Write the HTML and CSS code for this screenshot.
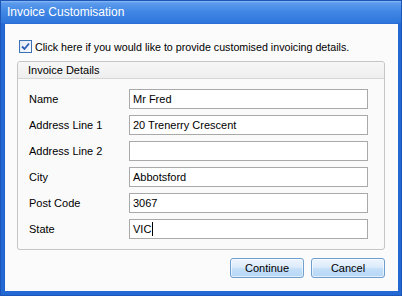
FILE: index.html
```html
<!DOCTYPE html>
<html lang="en">
<head>
  <meta charset="UTF-8">
  <meta name="viewport" content="width=device-width, initial-scale=1.0">
  <title>Invoice Customisation</title>
  <link rel="stylesheet" href="styles.css">
</head>
<body>
  <div class="window">
    <div class="titlebar">Invoice Customisation</div>
    <div class="client">
      <label class="check-row">
        <span class="checkbox">
          <svg width="9" height="9" viewBox="0 0 9 9">
            <path d="M1 4.5 L3.5 7 L8 1.5" fill="none" stroke="#2a5bb5" stroke-width="1.8"/>
          </svg>
        </span>
        Click here if you would like to provide customised invoicing details.
      </label>

      <div class="group">
        <div class="group-header">Invoice Details</div>
        <div class="group-body">
          <div class="row"><span class="label">Name</span><div class="field">Mr Fred</div></div>
          <div class="row"><span class="label">Address Line 1</span><div class="field">20 Trenerry Crescent</div></div>
          <div class="row"><span class="label">Address Line 2</span><div class="field"></div></div>
          <div class="row"><span class="label">City</span><div class="field">Abbotsford</div></div>
          <div class="row"><span class="label">Post Code</span><div class="field">3067</div></div>
          <div class="row"><span class="label">State</span><div class="field">VIC<span class="caret"></span></div></div>
        </div>
      </div>

      <div class="buttons">
        <button class="btn">Continue</button>
        <button class="btn">Cancel</button>
      </div>
    </div>
  </div>
</body>
</html>
```

FILE: styles.css
```css
body {
  margin: 0;
  font-family: Tahoma, 'Liberation Sans', Arial, sans-serif;
  font-size: 11px;
  color: #000;
}
.window {
  width: 402px;
  height: 296px;
  box-sizing: border-box;
  display: flex;
  flex-direction: column;
  background: #2468d4;
  border: 1px solid #1b56b8;
}
.titlebar {
  height: 22px;
  box-sizing: border-box;
  padding: 4px 0 0 6px;
  font-size: 12px;
  color: #fff;
  background: linear-gradient(#8dbaf3 0, #5b9bec 2px, #3f86e4 50%, #2f76dc 100%);
}
.client {
  flex: 1;
  margin: 0 3px 4px 3px;
  padding: 16px 13px 0 13px;
  background: #fbfbfb;
  border-top: 1px solid #2c6ed6;
  box-shadow: inset 1px 0 0 #1f62cc;
}
.check-row {
  display: flex;
  align-items: center;
  gap: 3px;
  padding-left: 2px;
  height: 13px;
  font-size: 10.7px;
}
.checkbox {
  width: 11px;
  height: 11px;
  border: 1px solid #3b71b3;
  background: linear-gradient(135deg, #dfe8f3, #fafcfe);
  display: flex;
  align-items: center;
  justify-content: center;
}
.group {
  margin-top: 8px;
  height: 189px;
  box-sizing: border-box;
  border: 1px solid #c6c6c6;
  border-radius: 3px;
  background: #fafafa;
}
.group-header {
  height: 17px;
  box-sizing: border-box;
  padding: 2px 0 0 10px;
  border-bottom: 1px solid #d6d6d6;
  background: linear-gradient(#f7f7f7, #eeeeee);
  border-radius: 3px 3px 0 0;
}
.group-body {
  padding: 10px 16px 0 11px;
  display: flex;
  flex-direction: column;
  gap: 6px;
}
.row {
  display: flex;
  align-items: center;
  height: 20px;
}
.label {
  width: 100px;
}
.field {
  flex: 1;
  height: 20px;
  box-sizing: border-box;
  border: 1px solid #a9a9a9;
  background: #fff;
  padding: 0 3px;
  display: flex;
  align-items: center;
}
.caret {
  display: inline-block;
  width: 1px;
  height: 14px;
  background: #000;
  margin-left: 1px;
}
.buttons {
  display: flex;
  justify-content: flex-end;
  gap: 7px;
  margin-top: 8px;
}
.btn {
  width: 74px;
  height: 20px;
  padding: 0;
  font-family: inherit;
  font-size: 11px;
  color: #000;
  border: 1px solid #6e9fd0;
  border-radius: 3px;
  background: linear-gradient(#eef5fd 0, #dcebfb 45%, #c3dff8 55%, #b6d7f6 100%);
  box-shadow: inset 0 0 0 1px rgba(255,255,255,0.6);
}
```
